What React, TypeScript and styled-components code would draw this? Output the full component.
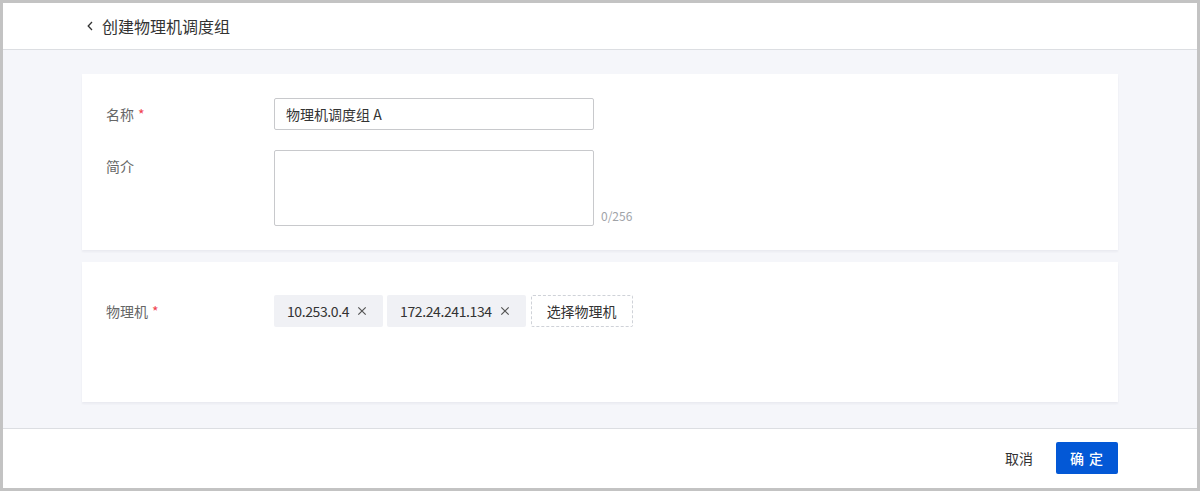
import React from 'react';
import styled, { createGlobalStyle } from 'styled-components';

const GlobalStyle = createGlobalStyle`
	body {
		margin: 0;
		font-family: "Noto Sans CJK SC", "Noto Sans", sans-serif;
		color: #333;
	}
	* {
		box-sizing: border-box;
	}
`;

const hosts: string[] = ["10.253.0.4", "172.24.241.134"];

const ChevronLeft = () => (
	<svg width="6" height="10" viewBox="0 0 6 10" fill="none">
		<path d="M5 1 L1.2 5 L5 9" stroke="#333" strokeWidth="1.3" />
	</svg>
);

const CloseIcon = () => (
	<svg width="16" height="16" viewBox="0 0 16 16" fill="none">
		<path d="M4.3 4.3 L11.7 11.7 M11.7 4.3 L4.3 11.7" stroke="#555" strokeWidth="1.2" />
	</svg>
);

const App: React.FC = () => (
	<>
		<GlobalStyle />
		<Frame>
			<Header>
				<BackButton>
					<ChevronLeft />
				</BackButton>
				<HeaderTitle>创建物理机调度组</HeaderTitle>
			</Header>
			<Body>
				<Card>
					<FormRow>
						<Label>
							名称<Required>*</Required>
						</Label>
						<TextInput defaultValue="物理机调度组 A" />
					</FormRow>
					<FormRow>
						<Label>简介</Label>
						<TextAreaWrap>
							<TextArea />
							<Counter>0/256</Counter>
						</TextAreaWrap>
					</FormRow>
				</Card>
				<Card $pad="33px 24px 75px">
					<FormRow>
						<Label>
							物理机<Required>*</Required>
						</Label>
						<TagList>
							{hosts.map((ip) => (
								<Tag key={ip}>
									<TagText>{ip}</TagText>
									<TagClose>
										<CloseIcon />
									</TagClose>
								</Tag>
							))}
							<PickButton>选择物理机</PickButton>
						</TagList>
					</FormRow>
				</Card>
			</Body>
			<Footer>
				<CancelButton>取消</CancelButton>
				<PrimaryButton>确 定</PrimaryButton>
			</Footer>
		</Frame>
	</>
);

const Frame = styled.div`
	height: 491px;
	border: 3px solid #c3c3c3;
	display: flex;
	flex-direction: column;
	background: #f5f6fa;
`;

const Header = styled.div`
	height: 47px;
	flex-shrink: 0;
	background: #fff;
	border-bottom: 1px solid #dcdee2;
	display: flex;
	align-items: center;
	padding-left: 84px;
	gap: 9px;
`;

const BackButton = styled.span`
	display: flex;
	align-items: center;
	width: 6px;
	height: 10px;
	margin-top: -1px;
`;

const HeaderTitle = styled.div`
	font-size: 16px;
	color: #333;
	line-height: 22px;
`;

const Body = styled.div`
	flex: 1;
	padding: 24px 79px;
	display: flex;
	flex-direction: column;
	gap: 12px;
`;

const Card = styled.div<{ $pad?: string }>`
	background: #fff;
	padding: ${(p) => p.$pad || '24px'};
	display: flex;
	flex-direction: column;
	gap: 20px;
	box-shadow: 0 2px 2px rgba(30, 40, 70, 0.05);
`;

const FormRow = styled.div`
	display: flex;
	align-items: flex-start;
`;

const Label = styled.div`
	width: 168px;
	flex-shrink: 0;
	font-size: 14px;
	line-height: 32px;
	color: #666;
`;

const Required = styled.span`
	color: #f0424f;
	margin-left: 4px;
`;

const TextInput = styled.input`
	width: 320px;
	height: 32px;
	border: 1px solid #c8c9cc;
	border-radius: 2px;
	padding: 0 11px;
	font-family: inherit;
	font-size: 14px;
	color: #333;
	outline: none;
`;

const TextAreaWrap = styled.div`
	display: flex;
	align-items: flex-end;
	gap: 7px;
`;

const TextArea = styled.textarea`
	width: 320px;
	height: 76px;
	border: 1px solid #c8c9cc;
	border-radius: 2px;
	resize: none;
	outline: none;
	font-family: inherit;
	font-size: 14px;
	padding: 6px 11px;
	display: block;
`;

const Counter = styled.span`
	font-size: 12px;
	line-height: 16px;
	margin-bottom: 2px;
	color: #a0a3a8;
`;

const TagList = styled.div`
	display: flex;
	align-items: center;
	gap: 4px;
`;

const Tag = styled.div`
	height: 32px;
	display: flex;
	align-items: center;
	gap: 5px;
	padding: 0 13px;
	background: #f0f1f5;
	border-radius: 2px;
	font-size: 14px;
	color: #333;
`;

const TagText = styled.span`
	letter-spacing: -0.4px;
`;

const TagClose = styled.span`
	display: flex;
	width: 16px;
	height: 16px;
`;

const PickButton = styled.div`
	height: 32px;
	margin-left: 1px;
	display: flex;
	align-items: center;
	padding: 0 15px;
	border: 1px dashed #cfd2d8;
	border-radius: 2px;
	font-size: 14px;
	color: #333;
	background: #fff;
`;

const Footer = styled.div`
	height: 60px;
	flex-shrink: 0;
	background: #fff;
	border-top: 1px solid #dcdee2;
	display: flex;
	align-items: center;
	justify-content: flex-end;
	padding: 0 79px 2px 0;
	gap: 8px;
`;

const CancelButton = styled.div`
	height: 32px;
	padding: 0 15px;
	display: flex;
	align-items: center;
	font-size: 14px;
	color: #333;
`;

const PrimaryButton = styled.div`
	height: 32px;
	width: 62px;
	display: flex;
	align-items: center;
	justify-content: center;
	background: #0358d6;
	border-radius: 2px;
	color: #fff;
	font-size: 14px;
	font-weight: 500;
	letter-spacing: 1px;
`;

export default App;
